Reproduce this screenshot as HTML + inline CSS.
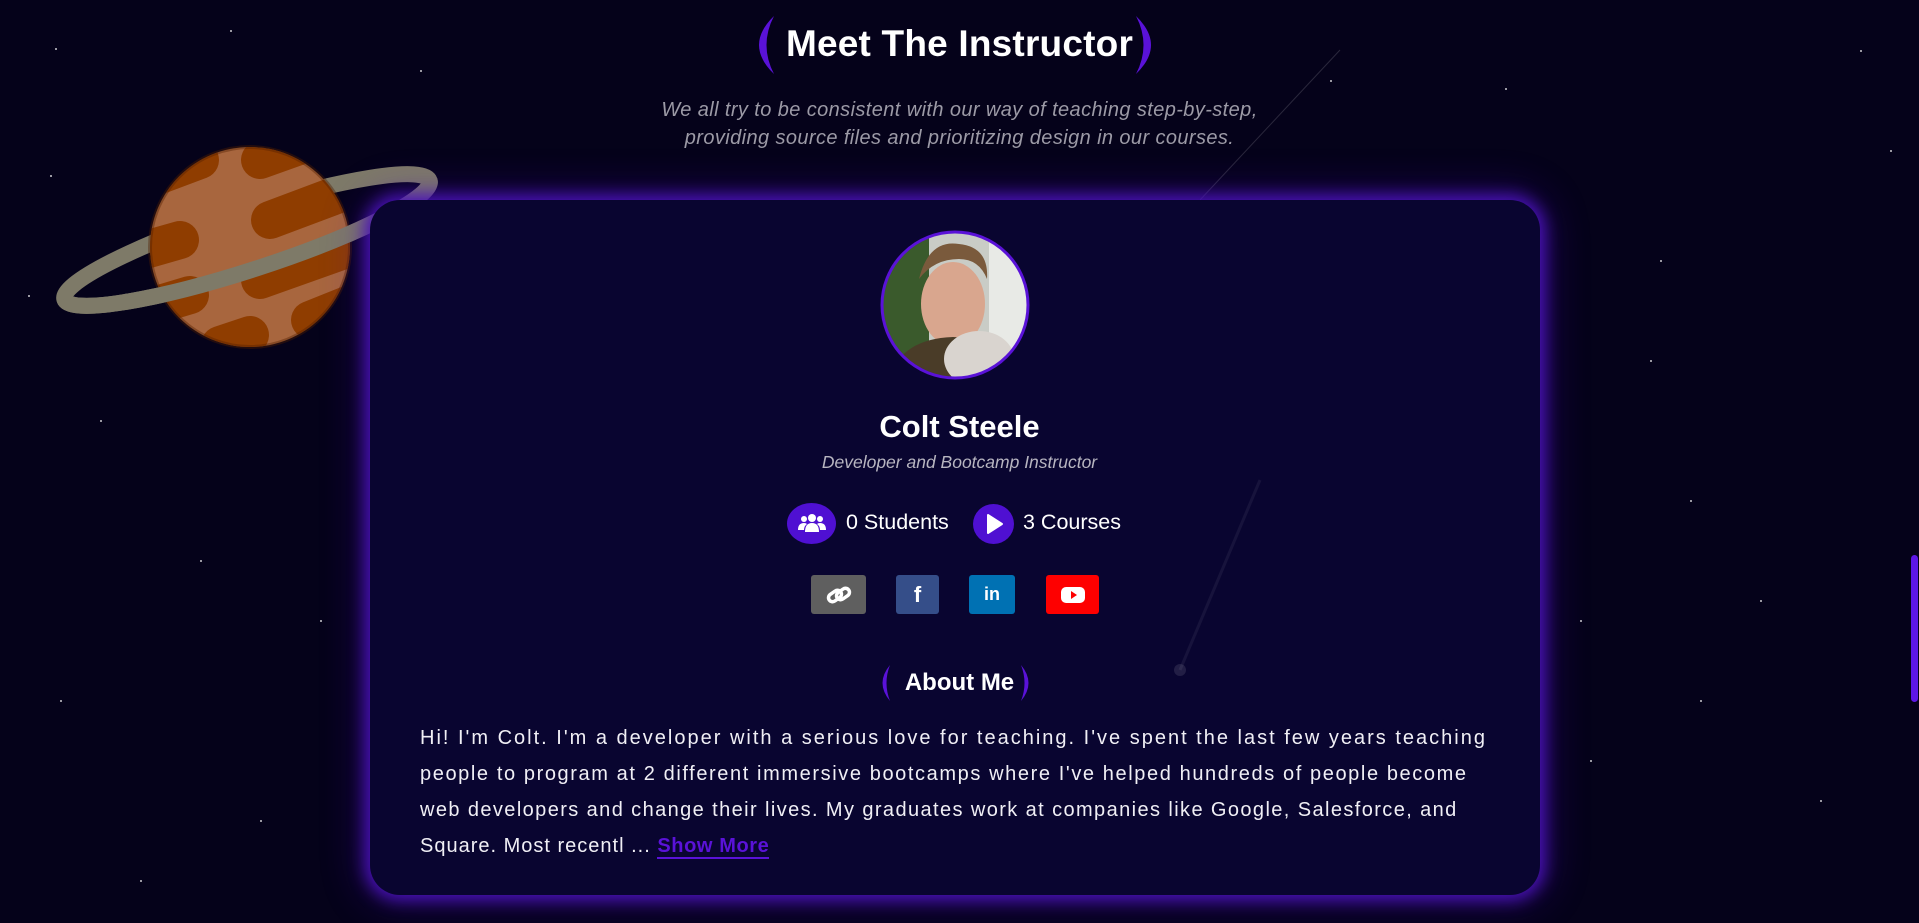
<!DOCTYPE html>
<html><head><meta charset="utf-8"><style>
*{margin:0;padding:0;box-sizing:border-box}
html,body{width:1919px;height:923px;overflow:hidden}
body{background:#05021a;font-family:"Liberation Sans",sans-serif;color:#fff;position:relative}
.abs{position:absolute}
.center{position:absolute;left:0;width:1919px;text-align:center}
.star{position:absolute;width:2px;height:2px;background:#fff;border-radius:1px;opacity:.8}
.card{position:absolute;left:370px;top:200px;width:1170px;height:695px;border-radius:30px;background:#090530;box-shadow:0 0 16px 5px #4a12b8,0 0 40px 10px rgba(80,20,200,.3)}
.soc{position:absolute;top:575px;height:39px;border-radius:3px;display:flex;align-items:center;justify-content:center}
.para div{white-space:nowrap;height:36px}
</style></head><body>
<div class="star" style="left:55px;top:48px"></div><div class="star" style="left:230px;top:30px"></div><div class="star" style="left:420px;top:70px"></div><div class="star" style="left:1330px;top:80px"></div><div class="star" style="left:1505px;top:88px"></div><div class="star" style="left:1860px;top:50px"></div><div class="star" style="left:1890px;top:150px"></div><div class="star" style="left:1660px;top:260px"></div><div class="star" style="left:1650px;top:360px"></div><div class="star" style="left:1690px;top:500px"></div><div class="star" style="left:1760px;top:600px"></div><div class="star" style="left:1700px;top:700px"></div><div class="star" style="left:1580px;top:620px"></div><div class="star" style="left:1590px;top:760px"></div><div class="star" style="left:1820px;top:800px"></div><div class="star" style="left:28px;top:295px"></div><div class="star" style="left:100px;top:420px"></div><div class="star" style="left:200px;top:560px"></div><div class="star" style="left:60px;top:700px"></div><div class="star" style="left:260px;top:820px"></div><div class="star" style="left:140px;top:880px"></div><div class="star" style="left:320px;top:620px"></div><div class="star" style="left:50px;top:175px"></div>
<svg class="abs" style="left:1190px;top:40px" width="160" height="170"><line x1="150" y1="10" x2="10" y2="160" stroke="rgba(255,255,255,.15)" stroke-width="1"/></svg>

<svg class="abs" style="left:752px;top:16px" width="24" height="58"><path d="M22 0 Q-8 29 22 58 Q7 29 22 0Z" fill="#5a12d8"/></svg>
<svg class="abs" style="left:1134px;top:16px" width="24" height="58"><path d="M2 0 Q32 29 2 58 Q17 29 2 0Z" fill="#5a12d8"/></svg>
<div class="center" style="top:23px;font-size:37px;font-weight:bold;letter-spacing:.2px">Meet The Instructor</div>
<div class="center" style="top:96px;font-size:20px;letter-spacing:.4px;font-style:italic;color:#9c9aa6;line-height:28px">We all try to be consistent with our way of teaching step-by-step,<br>providing source files and prioritizing design in our courses.</div>

<svg class="abs" style="left:0;top:130px" width="470" height="240" viewBox="0 0 470 240">
<defs><clipPath id="pc"><circle cx="250" cy="117" r="100"/></clipPath></defs>
<g transform="translate(247 110) rotate(-18)"><ellipse cx="0" cy="0" rx="192" ry="30" fill="none" stroke="#7e7a68" stroke-width="16"/></g>
<circle cx="250" cy="117" r="100" fill="#a8663e"/>
<g clip-path="url(#pc)" stroke="#8f3d00" stroke-width="38" stroke-linecap="round">
<line x1="120" y1="60" x2="200" y2="30"/><line x1="260" y1="30" x2="330" y2="5"/><line x1="270" y1="90" x2="350" y2="60"/><line x1="110" y1="130" x2="180" y2="110"/><line x1="260" y1="150" x2="350" y2="118"/><line x1="140" y1="180" x2="190" y2="165"/><line x1="310" y1="190" x2="360" y2="170"/><line x1="220" y1="215" x2="250" y2="205"/>
</g>
<circle cx="250" cy="117" r="100" fill="none" stroke="rgba(80,30,0,.4)" stroke-width="4"/>
<g transform="translate(247 110) rotate(-18)"><path d="M-192 0 A192 30 0 0 0 192 0" fill="none" stroke="#7e7a68" stroke-width="16"/></g>
</svg>

<div class="card"></div>
<svg class="abs" style="left:1150px;top:470px" width="120" height="220"><line x1="110" y1="10" x2="30" y2="200" stroke="rgba(255,255,255,.06)" stroke-width="3"/><circle cx="30" cy="200" r="6" fill="rgba(255,255,255,.1)"/></svg>

<svg class="abs" style="left:879px;top:229px" width="152" height="152" viewBox="0 0 152 152">
<defs><clipPath id="av"><circle cx="76" cy="76" r="73"/></clipPath></defs>
<g clip-path="url(#av)">
<rect width="152" height="152" fill="#c9ccc6"/>
<rect x="0" y="0" width="50" height="152" fill="#3a5a2c"/>
<rect x="110" y="0" width="42" height="152" fill="#e8eae6"/>
<ellipse cx="74" cy="75" rx="32" ry="42" fill="#d9a68e"/>
<path d="M40 50 Q50 10 80 15 Q110 18 108 50 Q100 30 80 30 Q55 30 40 50Z" fill="#7a5a3c"/>
<path d="M10 152 Q20 110 74 108 Q130 110 140 152Z" fill="#4a3c28"/>
<ellipse cx="100" cy="130" rx="35" ry="28" fill="#d9d4cf"/>
</g>
<circle cx="76" cy="76" r="73" fill="none" stroke="#5a12d8" stroke-width="3"/>
</svg>

<div class="center" style="top:409px;font-size:31px;font-weight:bold">Colt Steele</div>
<div class="center" style="top:452px;font-size:17.5px;font-style:italic;color:#b7b5c0">Developer and Bootcamp Instructor</div>

<div class="abs" style="left:787px;top:503px;width:49px;height:41px;border-radius:50%;background:#4f10d2"></div>
<svg class="abs" style="left:797px;top:510px" width="30" height="26" viewBox="0 0 30 26"><circle cx="15" cy="8" r="4" fill="#fff"/><circle cx="7" cy="9" r="3" fill="#fff"/><circle cx="23" cy="9" r="3" fill="#fff"/><path d="M8 22 Q8 13 15 13 Q22 13 22 22Z" fill="#fff"/><path d="M1 20 Q1 13 7 13 Q9 13 10 14 Q7 16 7 20Z" fill="#fff"/><path d="M29 20 Q29 13 23 13 Q21 13 20 14 Q23 16 23 20Z" fill="#fff"/></svg>
<div class="abs" style="left:846px;top:510px;font-size:21.5px">0 Students</div>
<div class="abs" style="left:973px;top:504px;width:41px;height:40px;border-radius:50%;background:#4f10d2"></div>
<svg class="abs" style="left:985px;top:513px" width="20" height="22"><path d="M3 2 L17 11 L3 20Z" fill="#fff" stroke="#fff" stroke-linejoin="round" stroke-width="2"/></svg>
<div class="abs" style="left:1023px;top:510px;font-size:21.5px">3 Courses</div>

<div class="soc" style="left:811px;width:55px;background:#5f5f5f"><svg width="26" height="22" viewBox="0 0 26 22"><g fill="none" stroke="#fff" stroke-width="3.5"><rect x="2" y="8" width="14" height="8" rx="4" transform="rotate(-35 9 12)"/><rect x="10" y="6" width="14" height="8" rx="4" transform="rotate(-35 17 10)"/></g></svg></div>
<div class="soc" style="left:896px;width:43px;background:#354e89"><span style="font-size:22px;font-weight:bold">f</span></div>
<div class="soc" style="left:969px;width:46px;background:#0071b3"><span style="font-size:18px;font-weight:bold">in</span></div>
<div class="soc" style="left:1046px;width:53px;background:#fe0000"><svg width="24" height="18"><rect x="0" y="1" width="24" height="16" rx="5" fill="#fff"/><path d="M10 5 L16 9 L10 13Z" fill="#fe0000"/></svg></div>

<svg class="abs" style="left:879px;top:665px" width="12" height="36"><path d="M11 0 Q-4 18 11 36 Q4 18 11 0Z" fill="#5a12d8"/></svg>
<svg class="abs" style="left:1020px;top:665px" width="12" height="36"><path d="M1 0 Q16 18 1 36 Q8 18 1 0Z" fill="#5a12d8"/></svg>
<div class="center" style="top:669px;font-size:24px;font-weight:bold">About Me</div>

<div class="abs para" style="left:420px;top:720px;width:1120px;font-size:20px;line-height:36px;color:#f0eff5">
<div style="letter-spacing:2px">Hi! I'm Colt. I'm a developer with a serious love for teaching. I've spent the last few years teaching</div>
<div style="letter-spacing:1.6px">people to program at 2 different immersive bootcamps where I've helped hundreds of people become</div>
<div style="letter-spacing:1.4px">web developers and change their lives. My graduates work at companies like Google, Salesforce, and</div>
<div style="letter-spacing:1px">Square. Most recentl ... <span style="color:#5a12d8;font-weight:bold;border-bottom:2px solid #5a12d8;letter-spacing:.6px">Show More</span></div>
</div>

<div class="abs" style="left:1911px;top:555px;width:7px;height:147px;border-radius:4px;background:#5d16e6"></div>
</body></html>
